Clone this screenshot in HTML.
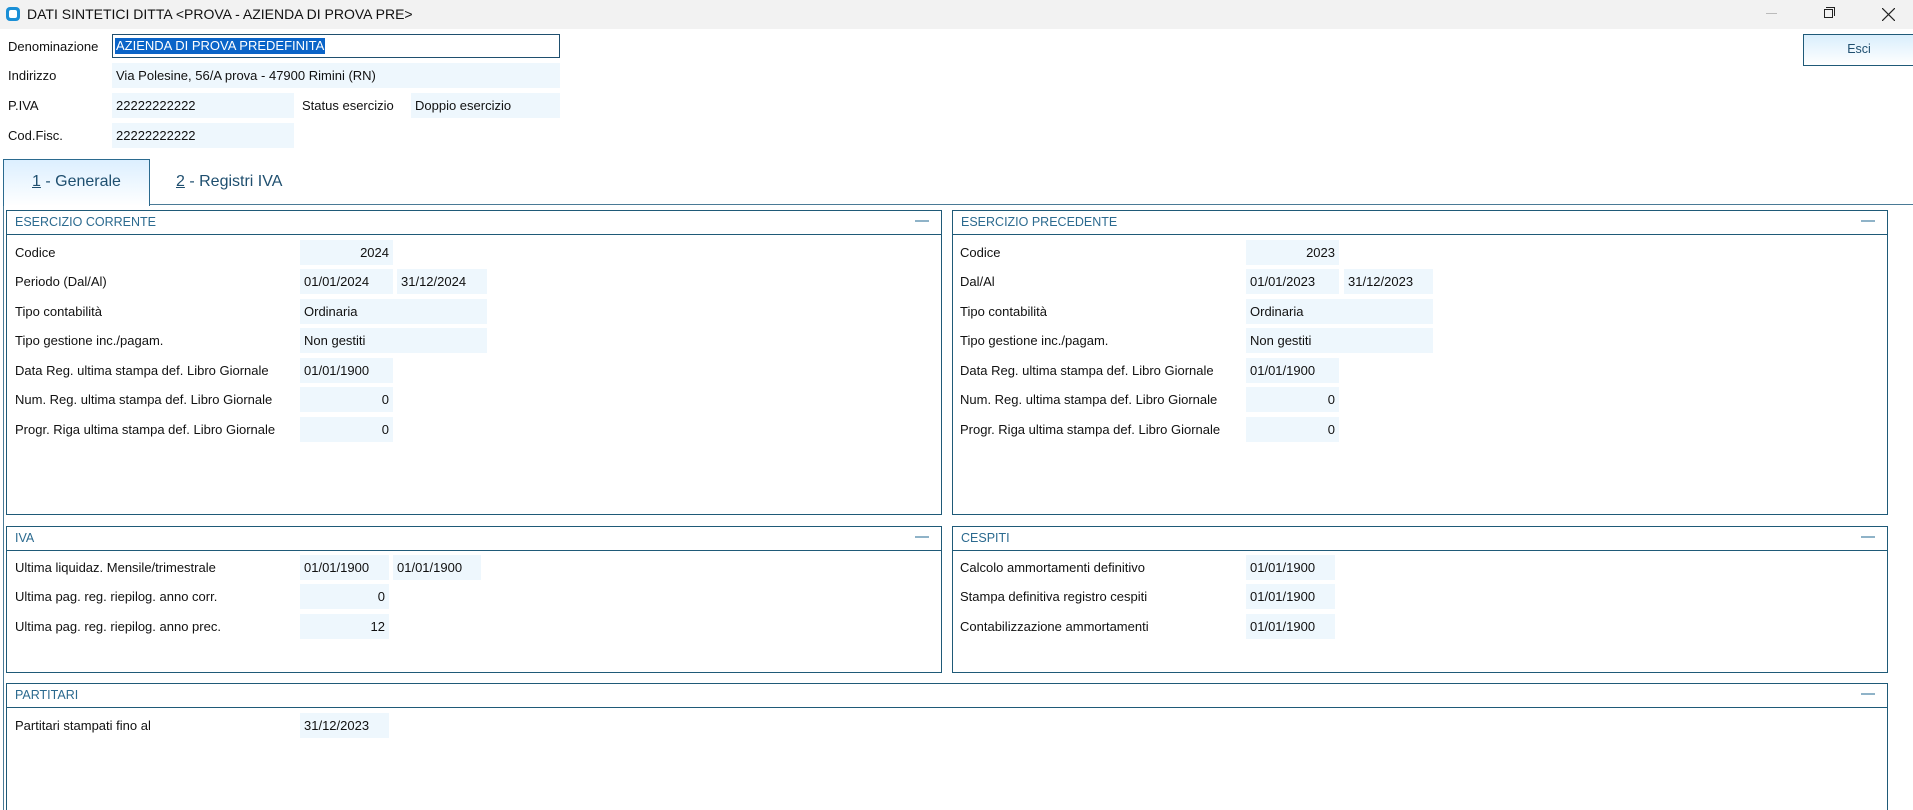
<!DOCTYPE html>
<html><head><meta charset="utf-8"><style>
*{margin:0;padding:0;box-sizing:border-box}
html{width:1913px;height:810px;overflow:hidden}
body{width:1913px;height:810px;background:#fff;font-family:"Liberation Sans",sans-serif;font-size:13px;color:#111;position:relative;overflow:hidden}
.a{position:absolute;white-space:nowrap}
.title{left:0;top:0;width:1913px;height:29px;background:#f2f2f2}
.f{position:absolute;background:#eef7fd;height:25px;line-height:25px;padding:0 4px}
.r{text-align:right}
.lb{position:absolute;height:25px;line-height:25px}
.pn{position:absolute;border:1.5px solid #1f5a78}
.ph{position:absolute;left:0;right:0;top:0;height:24px;border-bottom:1.5px solid #1f5a78;color:#2b6a8f;line-height:23px;padding-left:8px;font-size:12.5px}
.ph:after{content:"";position:absolute;right:12px;top:9px;width:14px;height:2px;background:#8fb3c8}
</style></head><body>
<div class="a title"></div>
<svg class="a" style="left:5px;top:6px" width="16" height="16"><rect x="1" y="1" width="14" height="14" rx="4" fill="#1a8fd6"/><rect x="4" y="4" width="8" height="8" rx="2" fill="#fff"/></svg>
<div class="a" style="left:27px;top:6px;font-size:14px;color:#111">DATI SINTETICI DITTA &lt;PROVA - AZIENDA DI PROVA PRE&gt;</div>
<div class="a" style="left:1766px;top:13px;width:11px;height:1px;background:#bbb"></div>
<div class="a" style="left:1824px;top:9px;width:9px;height:9px;border:1px solid #222"></div>
<div class="a" style="left:1826px;top:7px;width:9px;height:9px;border-top:1px solid #222;border-right:1px solid #222"></div>
<svg class="a" style="left:1882px;top:8px" width="13" height="13"><path d="M0 0L13 13M13 0L0 13" stroke="#222" stroke-width="1.2"/></svg>

<div class="lb" style="left:8px;top:34px">Denominazione</div>
<div class="a" style="left:112px;top:34px;width:448px;height:24px;border:1.5px solid #1f4f6f"></div>
<div class="a" style="left:115px;top:38px;height:16px;line-height:16px;background:#0a64c8;color:#fff;padding:0 1px">AZIENDA DI PROVA PREDEFINITA</div>
<div class="lb" style="left:8px;top:63px">Indirizzo</div>
<div class="f" style="left:112px;top:63px;width:448px">Via Polesine, 56/A prova - 47900 Rimini (RN)</div>
<div class="lb" style="left:8px;top:93px">P.IVA</div>
<div class="f" style="left:112px;top:93px;width:182px">22222222222</div>
<div class="lb" style="left:302px;top:93px">Status esercizio</div>
<div class="f" style="left:411px;top:93px;width:149px">Doppio esercizio</div>
<div class="lb" style="left:8px;top:123px">Cod.Fisc.</div>
<div class="f" style="left:112px;top:123px;width:182px">22222222222</div>

<div class="a" style="left:1803px;top:34px;width:112px;height:32px;border:1.5px solid #1f5a78;background:linear-gradient(#d9eefc,#fff);text-align:center;line-height:29px;color:#1f4f6f;font-size:12.5px">Esci</div>

<div class="a" style="left:3px;top:159px;width:147px;height:47px;border:1px solid #2b6a8f;border-bottom:none;background:linear-gradient(#dcefff,#fff);z-index:2"></div>
<div class="a" style="left:32px;top:173px;font-size:16px;color:#1f4f6f;z-index:3"><u>1</u> - Generale</div>
<div class="a" style="left:176px;top:173px;font-size:16px;color:#1f4f6f"><u>2</u> - Registri IVA</div>
<div class="a" style="left:149px;top:204px;width:1764px;height:1px;background:#4a7a96"></div>
<div class="a" style="left:3px;top:205px;width:1px;height:605px;background:#4a7a96"></div>

<div class="pn" style="left:6px;top:210px;width:936px;height:305px"><div class="ph">ESERCIZIO CORRENTE</div></div>
<div class="lb" style="left:15px;top:240px">Codice</div><div class="f r" style="left:300px;top:240px;width:93px">2024</div>
<div class="lb" style="left:15px;top:269px">Periodo (Dal/Al)</div><div class="f" style="left:300px;top:269px;width:93px">01/01/2024</div><div class="f" style="left:397px;top:269px;width:90px">31/12/2024</div>
<div class="lb" style="left:15px;top:299px">Tipo contabilità</div><div class="f" style="left:300px;top:299px;width:187px">Ordinaria</div>
<div class="lb" style="left:15px;top:328px">Tipo gestione inc./pagam.</div><div class="f" style="left:300px;top:328px;width:187px">Non gestiti</div>
<div class="lb" style="left:15px;top:358px">Data Reg. ultima stampa def. Libro Giornale</div><div class="f" style="left:300px;top:358px;width:93px">01/01/1900</div>
<div class="lb" style="left:15px;top:387px">Num. Reg. ultima stampa def. Libro Giornale</div><div class="f r" style="left:300px;top:387px;width:93px">0</div>
<div class="lb" style="left:15px;top:417px">Progr. Riga ultima stampa def. Libro Giornale</div><div class="f r" style="left:300px;top:417px;width:93px">0</div>

<div class="pn" style="left:952px;top:210px;width:936px;height:305px"><div class="ph">ESERCIZIO PRECEDENTE</div></div>
<div class="lb" style="left:960px;top:240px">Codice</div><div class="f r" style="left:1246px;top:240px;width:93px">2023</div>
<div class="lb" style="left:960px;top:269px">Dal/Al</div><div class="f" style="left:1246px;top:269px;width:93px">01/01/2023</div><div class="f" style="left:1344px;top:269px;width:89px">31/12/2023</div>
<div class="lb" style="left:960px;top:299px">Tipo contabilità</div><div class="f" style="left:1246px;top:299px;width:187px">Ordinaria</div>
<div class="lb" style="left:960px;top:328px">Tipo gestione inc./pagam.</div><div class="f" style="left:1246px;top:328px;width:187px">Non gestiti</div>
<div class="lb" style="left:960px;top:358px">Data Reg. ultima stampa def. Libro Giornale</div><div class="f" style="left:1246px;top:358px;width:93px">01/01/1900</div>
<div class="lb" style="left:960px;top:387px">Num. Reg. ultima stampa def. Libro Giornale</div><div class="f r" style="left:1246px;top:387px;width:93px">0</div>
<div class="lb" style="left:960px;top:417px">Progr. Riga ultima stampa def. Libro Giornale</div><div class="f r" style="left:1246px;top:417px;width:93px">0</div>

<div class="pn" style="left:6px;top:526px;width:936px;height:147px"><div class="ph">IVA</div></div>
<div class="lb" style="left:15px;top:555px">Ultima liquidaz. Mensile/trimestrale</div><div class="f" style="left:300px;top:555px;width:89px">01/01/1900</div><div class="f" style="left:393px;top:555px;width:88px">01/01/1900</div>
<div class="lb" style="left:15px;top:584px">Ultima pag. reg. riepilog. anno corr.</div><div class="f r" style="left:300px;top:584px;width:89px">0</div>
<div class="lb" style="left:15px;top:614px">Ultima pag. reg. riepilog. anno prec.</div><div class="f r" style="left:300px;top:614px;width:89px">12</div>

<div class="pn" style="left:952px;top:526px;width:936px;height:147px"><div class="ph">CESPITI</div></div>
<div class="lb" style="left:960px;top:555px">Calcolo ammortamenti definitivo</div><div class="f" style="left:1246px;top:555px;width:89px">01/01/1900</div>
<div class="lb" style="left:960px;top:584px">Stampa definitiva registro cespiti</div><div class="f" style="left:1246px;top:584px;width:89px">01/01/1900</div>
<div class="lb" style="left:960px;top:614px">Contabilizzazione ammortamenti</div><div class="f" style="left:1246px;top:614px;width:89px">01/01/1900</div>

<div class="pn" style="left:6px;top:683px;width:1882px;height:140px"><div class="ph">PARTITARI</div></div>
<div class="lb" style="left:15px;top:713px">Partitari stampati fino al</div><div class="f" style="left:300px;top:713px;width:89px">31/12/2023</div>
</body></html>
